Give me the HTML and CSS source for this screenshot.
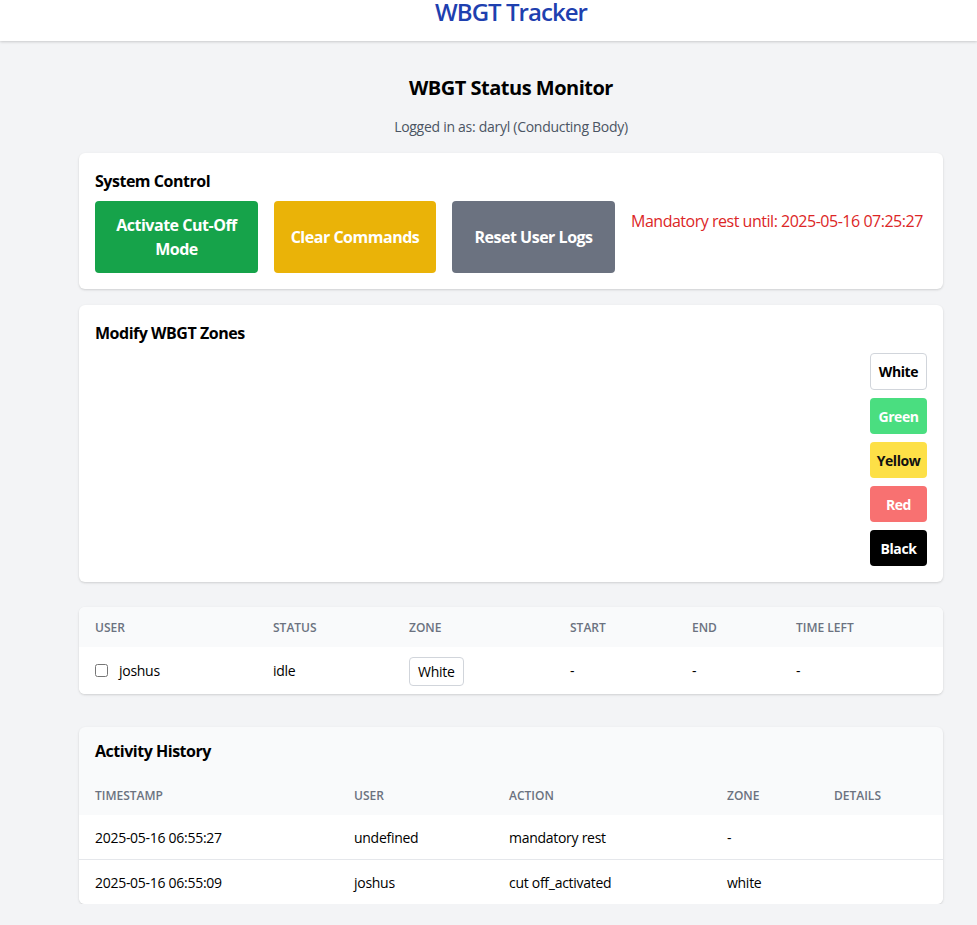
FILE: index.html
```html
<!DOCTYPE html>
<html lang="en">
<head>
<meta charset="utf-8">
<title>WBGT Tracker</title>
<link rel="stylesheet" href="styles.css">
</head>
<body>
<header class="topbar">
  <h1 class="brand">WBGT Tracker</h1>
</header>
<main class="page">
  <div class="container">
    <h2 class="page-title">WBGT Status Monitor</h2>
    <p class="login-info">Logged in as: daryl (Conducting Body)</p>

    <section class="card card-control">
      <h3 class="card-title">System Control</h3>
      <div class="control-row">
        <button class="btn btn-green">Activate Cut-Off Mode</button>
        <button class="btn btn-yellow">Clear Commands</button>
        <button class="btn btn-gray">Reset User Logs</button>
        <p class="rest-note">Mandatory rest until: 2025-05-16 07:25:27</p>
      </div>
    </section>

    <section class="card card-zones">
      <h3 class="card-title">Modify WBGT Zones</h3>
      <div class="zone-list">
        <button class="zone zone-white">White</button>
        <button class="zone zone-green">Green</button>
        <button class="zone zone-yellow">Yellow</button>
        <button class="zone zone-red">Red</button>
        <button class="zone zone-black">Black</button>
      </div>
    </section>

    <section class="card card-table">
      <table class="data users">
        <colgroup>
          <col class="u-c1"><col class="u-c2"><col class="u-c3"><col class="u-c4"><col class="u-c5"><col class="u-c6">
        </colgroup>
        <thead>
          <tr><th>User</th><th>Status</th><th>Zone</th><th>Start</th><th>End</th><th>Time Left</th></tr>
        </thead>
        <tbody>
          <tr>
            <td><label class="user-cell"><input type="checkbox" class="check"><span>joshus</span></label></td>
            <td>idle</td>
            <td><button class="zone-pill">White</button></td>
            <td>-</td>
            <td>-</td>
            <td>-</td>
          </tr>
        </tbody>
      </table>
    </section>

    <section class="card card-history">
      <h3 class="history-title">Activity History</h3>
      <table class="data history">
        <colgroup>
          <col class="h-c1"><col class="h-c2"><col class="h-c3"><col class="h-c4"><col class="h-c5">
        </colgroup>
        <thead>
          <tr><th>Timestamp</th><th>User</th><th>Action</th><th>Zone</th><th>Details</th></tr>
        </thead>
        <tbody>
          <tr><td>2025-05-16 06:55:27</td><td>undefined</td><td>mandatory rest</td><td>-</td><td></td></tr>
          <tr><td>2025-05-16 06:55:09</td><td>joshus</td><td>cut off_activated</td><td>white</td><td></td></tr>
        </tbody>
      </table>
    </section>
  </div>
</main>
</body>
</html>
```

FILE: styles.css
```css
* { box-sizing: border-box; }

html, body {
  margin: 0;
  padding: 0;
}

body {
  font-family: "Open Sans", "Noto Sans", "Liberation Sans", sans-serif;
  background: #f3f4f6;
  color: #111;
  font-size: 14px;
  letter-spacing: -0.02em;
}

.topbar {
  background: #fff;
  height: 41px;
  padding-left: 45px;
  box-shadow: 0 1px 3px rgba(0,0,0,0.12), 0 1px 2px rgba(0,0,0,0.06);
  position: relative;
}

.brand {
  margin: 0;
  text-align: center;
  font-size: 24px;
  line-height: 24px;
  font-weight: 600;
  letter-spacing: -0.04em;
  color: #1e40af;
}

.page {
  padding: 33px 0 0 45px;
}

.container {
  width: 864px;
  margin: 0 auto;
}

.page-title {
  margin: 0;
  text-align: center;
  font-size: 20px;
  line-height: 28px;
  font-weight: 700;
  letter-spacing: -0.025em;
  color: #000;
}

.login-info {
  margin: 15px 0 16px;
  text-align: center;
  font-size: 14px;
  line-height: 20px;
  color: #4b5563;
}

.card {
  background: #fff;
  border-radius: 6px;
  box-shadow: 0 1px 3px rgba(0,0,0,0.1), 0 1px 2px rgba(0,0,0,0.06);
}

.card-control,
.card-zones {
  padding: 16px;
}

.card-control { margin-bottom: 16px; }
.card-zones { margin-bottom: 25px; }
.card-table { margin-bottom: 33px; overflow: hidden; }
.card-history { overflow: hidden; background: #f9fafb; }

.card-title {
  margin: 0 0 8px;
  font-size: 16px;
  line-height: 24px;
  font-weight: 700;
  letter-spacing: -0.03em;
  color: #000;
}

.control-row {
  display: flex;
  align-items: flex-start;
  gap: 16px;
}

.btn {
  flex: 0 0 163px;
  width: 163px;
  height: 72px;
  border: none;
  border-radius: 4px;
  color: #fff;
  font-family: inherit;
  font-size: 16px;
  line-height: 24px;
  font-weight: 700;
  letter-spacing: -0.03em;
  padding: 12px 8px;
  text-align: center;
}

.btn-green { background: #16a34a; }
.btn-yellow { background: #eab308; flex-basis: 162px; width: 162px; }
.btn-gray { background: #6b7280; }

.rest-note {
  margin: 0;
  padding-top: 8px;
  font-size: 16px;
  line-height: 24px;
  letter-spacing: -0.03em;
  white-space: nowrap;
  color: #dc2626;
}

.zone-list {
  display: flex;
  flex-direction: column;
  align-items: flex-end;
  gap: 8px;
}

.zone {
  width: 57px;
  height: 36px;
  border: none;
  border-radius: 4px;
  font-family: inherit;
  font-size: 14px;
  font-weight: 700;
  letter-spacing: -0.03em;
  padding: 0;
}

.zone-white {
  background: #fff;
  border: 1px solid #d1d5db;
  color: #000;
  height: 37px;
}
.zone-green { background: #4ade80; color: #fff; }
.zone-yellow { background: #fde047; color: #111; }
.zone-red { background: #f87171; color: #fff; }
.zone-black { background: #000; color: #fff; }

.data {
  width: 100%;
  border-collapse: collapse;
  table-layout: fixed;
}

.data th {
  background: #f9fafb;
  text-align: left;
  font-size: 12px;
  line-height: 16px;
  font-weight: 600;
  color: #6b7280;
  text-transform: uppercase;
  letter-spacing: 0;
  padding: 13px 16px 11px;
}

.data td {
  background: #fff;
  font-size: 14px;
  color: #000;
  padding: 0 16px;
  vertical-align: middle;
}

.users td { height: 47px; }

.u-c1 { width: 178px; }
.u-c2 { width: 136px; }
.u-c3 { width: 161px; }
.u-c4 { width: 122px; }
.u-c5 { width: 104px; }
.u-c6 { width: 163px; }

.user-cell {
  display: flex;
  align-items: center;
  gap: 11px;
}

.check {
  margin: 0;
  width: 13px;
  height: 13px;
}

.zone-pill {
  background: #fff;
  border: 1px solid #d1d5db;
  border-radius: 4px;
  height: 29px;
  padding: 0 8px;
  font-family: inherit;
  font-size: 14px;
  letter-spacing: -0.02em;
  color: #000;
  margin-top: 2px;
}

.history-title {
  margin: 0;
  padding: 12px 16px;
  font-size: 16px;
  line-height: 24px;
  font-weight: 700;
  letter-spacing: -0.03em;
  color: #000;
}

.history td {
  padding: 11px 16px 9px;
  line-height: 24px;
}

.history tbody tr + tr td {
  border-top: 1px solid #e5e7eb;
}

.h-c1 { width: 259px; }
.h-c2 { width: 155px; }
.h-c3 { width: 218px; }
.h-c4 { width: 107px; }
.h-c5 { width: 125px; }
```
